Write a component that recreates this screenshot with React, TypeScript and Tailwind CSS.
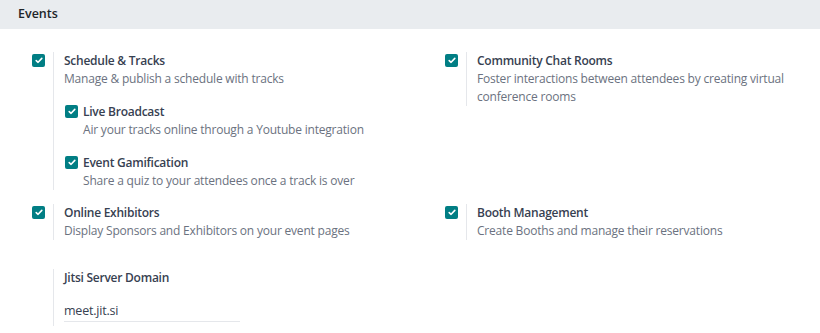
type Item = { title: string; desc: string };

function Check() {
  return (
    <span className="flex h-[13px] w-[13px] shrink-0 items-center justify-center rounded-[2px] bg-[#017e84]">
      <svg width="8" height="7" viewBox="0 0 8 7" fill="none">
        <path d="M1.2 3.6 L3.1 5.3 L6.8 1.4" stroke="white" strokeWidth="1.6" strokeLinecap="round" strokeLinejoin="round" />
      </svg>
    </span>
  );
}

function Title({ children }: { children: React.ReactNode }) {
  return (
    <div className="text-[12px] font-semibold leading-[18px] tracking-[-0.25px] text-[#374151]">{children}</div>
  );
}

function Desc({ children }: { children: React.ReactNode }) {
  return <div className="text-[12px] leading-[18px] tracking-[-0.2px] text-[#6b7280]">{children}</div>;
}

function Setting({ item, children }: { item: Item; children?: React.ReactNode }) {
  return (
    <div className="flex">
      <div className="w-[21px] shrink-0 pt-[2px]">
        <Check />
      </div>
      <div className="border-l border-[#e5e7eb] pl-[10px]">
        <Title>{item.title}</Title>
        <Desc>{item.desc}</Desc>
        {children}
      </div>
    </div>
  );
}

function SubSetting({ item }: { item: Item }) {
  return (
    <div className="mt-[15px]">
      <div className="flex items-start">
        <div className="w-[19px] shrink-0 pl-px pt-[2px]">
          <Check />
        </div>
        <Title>{item.title}</Title>
      </div>
      <div className="pl-[19px]">
        <Desc>{item.desc}</Desc>
      </div>
    </div>
  );
}

export default function App() {
  return (
    <div className="h-[333px] w-[820px] overflow-hidden bg-white" style={{ fontFamily: '"Open Sans", sans-serif' }}>
      <div className="flex h-[29px] items-center bg-[#e9ecef] pl-[18px] text-[12.5px] font-semibold text-[#212529]">
        Events
      </div>
      <div className="grid grid-cols-[413px_1fr] pl-[32px] pt-[23px]">
        <div>
          <Setting item={{ title: 'Schedule & Tracks', desc: 'Manage & publish a schedule with tracks' }}>
            <SubSetting item={{ title: 'Live Broadcast', desc: 'Air your tracks online through a Youtube integration' }} />
            <SubSetting item={{ title: 'Event Gamification', desc: 'Share a quiz to your attendees once a track is over' }} />
          </Setting>
        </div>
        <div>
          <Setting
            item={{
              title: 'Community Chat Rooms',
              desc: 'Foster interactions between attendees by creating virtual conference rooms',
            }}
          />
        </div>
        <div className="mt-[14px]">
          <Setting item={{ title: 'Online Exhibitors', desc: 'Display Sponsors and Exhibitors on your event pages' }} />
        </div>
        <div className="mt-[14px]">
          <Setting item={{ title: 'Booth Management', desc: 'Create Booths and manage their reservations' }} />
        </div>
        <div className="mt-[29px] flex">
          <div className="w-[21px] shrink-0" />
          <div className="border-l border-[#e5e7eb] pb-[4px] pl-[10px]">
            <Title>Jitsi Server Domain</Title>
            <div className="mt-[14px] w-[176px] border-b border-[#e5e7eb] text-[12.5px] leading-[20px] tracking-[-0.2px] text-[#374151]">
              meet.jit.si
            </div>
          </div>
        </div>
      </div>
    </div>
  );
}
